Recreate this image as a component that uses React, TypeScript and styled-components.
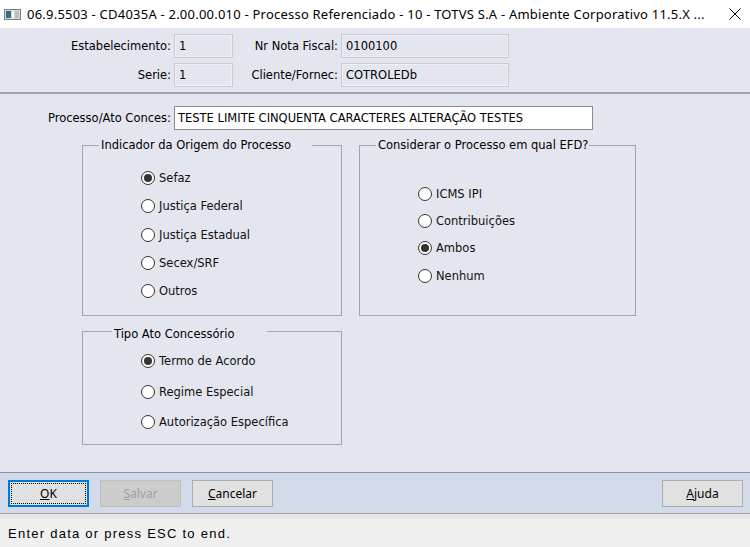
import React from "react";
import styled, { createGlobalStyle } from "styled-components";

const GlobalStyle = createGlobalStyle`
  *, *::before, *::after { box-sizing: border-box; }
  html, body { margin: 0; padding: 0; }
  body { width: 750px; height: 547px; overflow: hidden; background: #ffffff; }
`;

const FORM_FONT = `"DejaVu Sans", Verdana, sans-serif`;
const UI_FONT = `"Noto Sans", "Segoe UI", sans-serif`;

const Window = styled.div`
  width: 750px;
  height: 547px;
  display: flex;
  flex-direction: column;
  background: #e3e6ee;
`;

const TitleBar = styled.div`
  height: 28px;
  flex: none;
  display: flex;
  align-items: center;
  background: #ffffff;
  padding: 0 9px 0 4px;
  font-family: ${UI_FONT};
  font-size: 13px;
  letter-spacing: 0.22px;
  color: #000;
`;

const TitleText = styled.span`
  margin-left: 6px;
  flex: 1;
  white-space: nowrap;
  overflow: hidden;
`;

const Header = styled.div`
  height: 64px;
  flex: none;
  padding-top: 6px;
  display: grid;
  grid-template-columns: 171px 59px 102px 168px;
  grid-auto-rows: 24px;
  column-gap: 3px;
  row-gap: 5px;
  align-content: start;
  align-items: center;
  font-family: ${FORM_FONT};
  font-size: 11.5px;
  color: #000;
`;

const Label = styled.span`
  text-align: right;
  white-space: nowrap;
`;

const ReadOnlyField = styled.div`
  height: 24px;
  display: flex;
  align-items: center;
  padding-left: 4px;
  border: 1px solid #c9cbd0;
  box-shadow: inset 0 0 0 1px #eef0f4;
  background: #e3e6ee;
`;

const Separator = styled.div`
  height: 2px;
  flex: none;
  background: #9ea3ad;
`;

const Body = styled.div`
  flex: 1;
  padding-top: 12px;
  font-family: ${FORM_FONT};
  font-size: 11.5px;
  color: #000;
`;

const ProcRow = styled.div`
  display: grid;
  grid-template-columns: 171px 419px;
  column-gap: 3px;
  align-items: center;
`;

const TextInput = styled.div`
  height: 24px;
  display: flex;
  align-items: center;
  padding-left: 3px;
  background: #ffffff;
  border: 1px solid #8c8c8c;
  white-space: nowrap;
`;

const Groups = styled.div`
  margin: 8px 0 0 82px;
  display: grid;
  grid-template-columns: 260px 277px;
  column-gap: 17px;
  row-gap: 5px;
`;

const GroupBox = styled.fieldset`
  margin: 0;
  padding: 0;
  min-width: 0;
  border: 1px solid #a2a4a8;
`;

const GroupTitle = styled.legend<{ $offset: number; $w?: number; $drop?: number }>`
  margin-left: ${(p) => p.$offset}px;
  padding: ${(p) => p.$drop ?? 0}px 1px 0 2px;
  width: ${(p) => (p.$w ? `${p.$w}px` : "auto")};
  line-height: 14px;
  white-space: nowrap;
`;

const RadioList = styled.div<{ $top: number; $row: number; $minH: number }>`
  display: flex;
  flex-direction: column;
  padding: ${(p) => p.$top}px 0 0 58px;
  min-height: ${(p) => p.$minH}px;
  & > * { height: ${(p) => p.$row}px; }
`;

const RadioRow = styled.div`
  display: flex;
  align-items: center;
  gap: 4px;
  color: #111;
  white-space: nowrap;
`;

const RadioCircle = styled.span<{ $on?: boolean }>`
  width: 14px;
  height: 14px;
  flex: none;
  border-radius: 50%;
  border: 1.3px solid #333;
  background: #fff;
  display: flex;
  align-items: center;
  justify-content: center;
  &::after {
    content: "";
    display: ${(p) => (p.$on ? "block" : "none")};
    width: 8px;
    height: 8px;
    border-radius: 50%;
    background: #333;
  }
`;

const ButtonBar = styled.div`
  height: 42px;
  flex: none;
  display: flex;
  align-items: center;
  gap: 11px;
  padding: 1px 7px 0 8px;
  background: #d3dbea;
  border-top: 1px solid #8f949d;
  border-bottom: 1px solid #9fa4ad;
`;

const Spacer = styled.div`
  flex: 1;
`;

const Button = styled.button<{ $focus?: boolean }>`
  width: 81px;
  height: 27px;
  margin: 0;
  padding: 0;
  font-family: ${UI_FONT};
  font-size: 12px;
  color: #000;
  background: #e1e1e1;
  border: ${(p) => (p.$focus ? "2px solid #0078d7" : "1px solid #adadad")};
  outline: ${(p) => (p.$focus ? "1px dotted #000" : "none")};
  outline-offset: -4px;
  &:disabled {
    background: #cccccc;
    border-color: #bfbfbf;
    color: #a0a0a0;
  }
`;

const Strip = styled.div`
  height: 5px;
  flex: none;
  background: #e6e6e6;
`;

const StatusBar = styled.div`
  height: 28px;
  flex: none;
  display: flex;
  align-items: center;
  padding-left: 8px;
  background: #f0f0f0;
  font-family: "Liberation Sans", Arial, sans-serif;
  font-size: 13px;
  letter-spacing: 1.25px;
  color: #000;
`;

const AppIcon = () => (
  <svg width="17" height="11" viewBox="0 0 17 11">
    <defs>
      <linearGradient id="ig" x1="0" y1="0" x2="1" y2="1">
        <stop offset="0" stopColor="#2f6f55" />
        <stop offset="1" stopColor="#3d6fae" />
      </linearGradient>
    </defs>
    <rect x="0.5" y="0.5" width="16" height="10" fill="#d6d9dc" stroke="#7c7f84" />
    <rect x="2" y="2" width="5" height="7" fill="url(#ig)" />
    <rect x="8" y="2" width="2" height="7" fill="#f7f7f7" />
    <rect x="11" y="2" width="4" height="7" fill="#b7c2c6" />
  </svg>
);

const CloseIcon = () => (
  <svg width="12" height="12" viewBox="0 0 12 12">
    <path d="M0.5 0.5 L11.5 11.5 M11.5 0.5 L0.5 11.5" stroke="#000" strokeWidth="1" fill="none" />
  </svg>
);

const Radio = ({ label, on }: { label: string; on?: boolean }) => (
  <RadioRow>
    <RadioCircle $on={on} />
    <span>{label}</span>
  </RadioRow>
);

export default function App() {
  return (
    <>
      <GlobalStyle />
      <Window>
        <TitleBar>
          <AppIcon />
          <TitleText>
            06.9.5503 - CD4035A - 2.00.00.010 - Processo Referenciado - 10 - TOTVS S.A - Ambiente Corporativo 11.5.X ...
          </TitleText>
          <CloseIcon />
        </TitleBar>

        <Header>
          <Label>Estabelecimento:</Label>
          <ReadOnlyField>1</ReadOnlyField>
          <Label>Nr Nota Fiscal:</Label>
          <ReadOnlyField>0100100</ReadOnlyField>
          <Label>Serie:</Label>
          <ReadOnlyField>1</ReadOnlyField>
          <Label>Cliente/Fornec:</Label>
          <ReadOnlyField>COTROLEDb</ReadOnlyField>
        </Header>
        <Separator />

        <Body>
          <ProcRow>
            <Label>Processo/Ato Conces:</Label>
            <TextInput>TESTE LIMITE CINQUENTA CARACTERES ALTERAÇÃO TESTES</TextInput>
          </ProcRow>

          <Groups>
            <GroupBox>
              <GroupTitle $offset={16} $w={213}>Indicador da Origem do Processo</GroupTitle>
              <RadioList $top={12} $row={28.3} $minH={163}>
                <Radio label="Sefaz" on />
                <Radio label="Justiça Federal" />
                <Radio label="Justiça Estadual" />
                <Radio label="Secex/SRF" />
                <Radio label="Outros" />
              </RadioList>
            </GroupBox>

            <GroupBox>
              <GroupTitle $offset={16}>Considerar o Processo em qual EFD?</GroupTitle>
              <RadioList $top={28} $row={27.3} $minH={163}>
                <Radio label="ICMS IPI" />
                <Radio label="Contribuições" />
                <Radio label="Ambos" on />
                <Radio label="Nenhum" />
              </RadioList>
            </GroupBox>

            <GroupBox>
              <GroupTitle $offset={29} $w={155} $drop={6}>Tipo Ato Concessório</GroupTitle>
              <RadioList $top={5} $row={30.5} $minH={103}>
                <Radio label="Termo de Acordo" on />
                <Radio label="Regime Especial" />
                <Radio label="Autorização Específica" />
              </RadioList>
            </GroupBox>
          </Groups>
        </Body>

        <ButtonBar>
          <Button $focus>
            <u>O</u>K
          </Button>
          <Button disabled>
            <u>S</u>alvar
          </Button>
          <Button>
            <u>C</u>ancelar
          </Button>
          <Spacer />
          <Button>
            <u>A</u>juda
          </Button>
        </ButtonBar>
        <Strip />
        <StatusBar>Enter data or press ESC to end.</StatusBar>
      </Window>
    </>
  );
}
